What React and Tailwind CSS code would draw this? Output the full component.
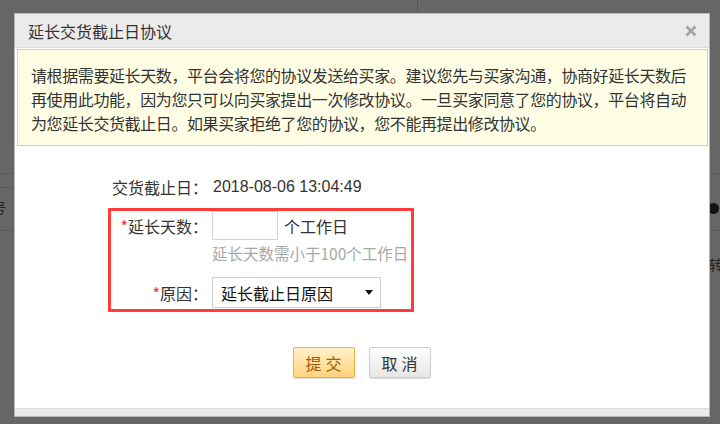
// Extend-delivery-deadline dialog over a dimmed page
import React from "react";

const FONT = { fontFamily: '"Noto Sans CJK SC", "Liberation Sans", sans-serif' };

function CloseIcon() {
  return (
    <svg width="12" height="12" viewBox="0 0 12 12" className="text-[#a3a3a3]">
      <path d="M1.5 1.5L10.5 10.5M10.5 1.5L1.5 10.5" stroke="currentColor" strokeWidth="2.6" />
    </svg>
  );
}

function Label({ children, required }) {
  return (
    <div className="w-[96px] shrink-0 text-right whitespace-nowrap">
      {required && <span className="text-[#ff2a2a]">*</span>}
      {children}
    </div>
  );
}

export default function App() {
  return (
    <div className="relative h-[424px] w-[720px] overflow-hidden bg-[#666666]" style={FONT}>
      {/* faint page behind the mask */}
      <div className="absolute left-0 top-[173px] h-px w-[14px] bg-[#5a5a5a]" />
      <div className="absolute left-0 top-[187px] h-px w-[14px] bg-[#5a5a5a]" />
      <div className="absolute left-0 top-[230px] h-px w-[14px] bg-[#5a5a5a]" />
      <div className="absolute left-0 top-[200px] text-[14px] leading-none text-[#222]">
        <span className="-ml-[8px]">号</span>
      </div>
      <div className="absolute left-[709px] top-[173px] h-px w-[11px] bg-[#5a5a5a]" />
      <div className="absolute left-[709px] top-[230px] h-px w-[11px] bg-[#5a5a5a]" />
      <div className="absolute left-[708px] top-[203px] h-[11px] w-[11px] rounded-full bg-[#111]" />
      <div className="absolute left-[709px] top-[257px] text-[14px] leading-none text-[#222]">转</div>
      <div className="absolute left-[417px] top-0 h-[13px] w-px bg-[#555]" />

      {/* dialog */}
      <div className="absolute left-[14px] top-[13px] w-[696px] border border-[#b8b8b8] bg-white">
        <div className="flex h-[34px] items-center justify-between border-b border-[#dcdcdc] bg-[#ebebeb] pl-[13px] pr-[12px]">
          <span className="text-[16px] text-[#333]">延长交货截止日协议</span>
          <CloseIcon />
        </div>

        <div className="ml-[2px] mr-[1px] mt-[1px] whitespace-nowrap border border-[#f5c97e] bg-[#fffee4] px-[13px] pb-[10px] pt-[13px] text-[16px] leading-[24px] tracking-[-0.4px] text-[#333]">
          请根据需要延长天数，平台会将您的协议发送给买家。建议您先与买家沟通，协商好延长天数后
          <br />
          再使用此功能，因为您只可以向买家提出一次修改协议。一旦买家同意了您的协议，平台将自动
          <br />
          为您延长交货截止日。如果买家拒绝了您的协议，您不能再提出修改协议。
        </div>

        <div className="pl-[93px] pt-[29px] text-[16px] text-[#333]">
          <div className="flex h-[24px] items-center pl-[4px] leading-[24px]">
            <Label>交货截止日：</Label>
            <span className="ml-[5px]" style={{ fontFamily: '"Liberation Sans", "Noto Sans CJK SC", sans-serif' }}>
              2018-08-06 13:04:49
            </span>
          </div>

          <div className="mt-[9px] w-[306px] border-[3px] border-[#ff3c3c] pb-[1px] pl-[1px]">
            <div className="flex h-[29px] items-center">
              <Label required>延长天数：</Label>
              <div className="ml-[4px] h-[29px] w-[66px] border border-[#d4d4d4] bg-white" />
              <span className="ml-[6px]">个工作日</span>
            </div>
            <div className="ml-[100px] mt-[3px] h-[20px] whitespace-nowrap text-[15.5px] leading-[20px] text-[#a8a8a8]">
              延长天数需小于100个工作日
            </div>
            <div className="mt-[14px] flex h-[31px] items-center">
              <Label required>原因：</Label>
              <div className="ml-[4px] flex h-[31px] w-[169px] items-center justify-between border border-[#cfcfcf] bg-white pl-[8px] pr-[7px] text-[#111]">
                <span>延长截止日原因</span>
                <svg width="8" height="5" viewBox="0 0 8 5">
                  <path d="M0 0H8L4 5Z" fill="#111" />
                </svg>
              </div>
            </div>
          </div>
        </div>

        <div className="mt-[35px] flex justify-center gap-[14px] pr-[1px]">
          <button className="h-[31px] w-[62px] rounded-[2px] border border-[#f0b13c] bg-gradient-to-b from-[#fff1c8] to-[#ffd47a] text-[16px] tracking-[4px] text-[#a25a0a] shadow-[0_1px_1px_rgba(0,0,0,0.15)]">
            <span className="pl-[4px]">提交</span>
          </button>
          <button className="h-[31px] w-[62px] rounded-[2px] border border-[#cfcfcf] bg-gradient-to-b from-[#ffffff] to-[#e6e6e6] text-[16px] tracking-[4px] text-[#333] shadow-[0_1px_1px_rgba(0,0,0,0.15)]">
            <span className="pl-[4px]">取消</span>
          </button>
        </div>

        <div className="mt-[30px] h-[8px] border-t border-[#dcdcdc] bg-[#ebebeb]" />
      </div>
    </div>
  );
}
